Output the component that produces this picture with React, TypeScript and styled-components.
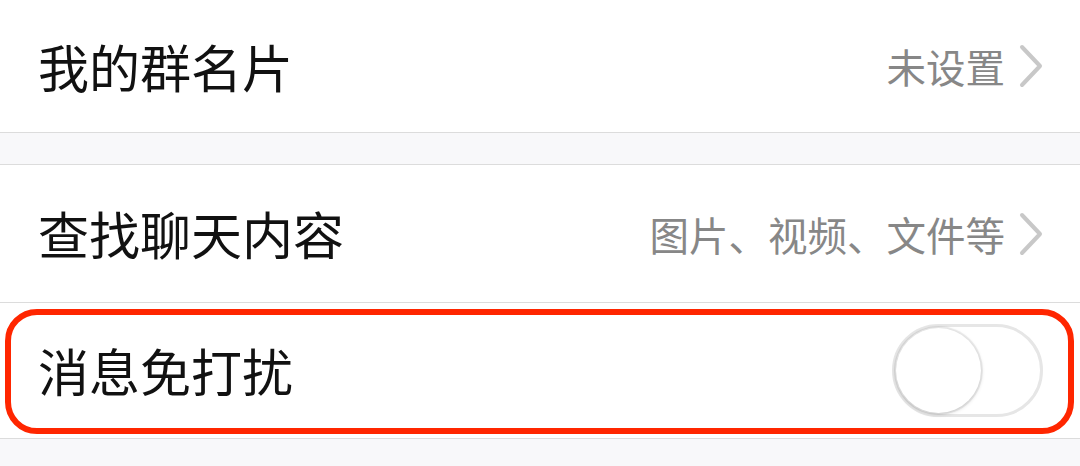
import React from "react";
import styled, { createGlobalStyle } from "styled-components";

const GlobalStyle = createGlobalStyle`
  body {
    margin: 0;
    background: #f8f8fa;
    font-family: "Noto Sans CJK SC", "Noto Sans", sans-serif;
  }
`;

const Page = styled.div`
  width: 1080px;
  height: 466px;
  overflow: hidden;
  background: #f8f8fa;
`;

const Group = styled.div<{ gapTop?: boolean }>`
  background: #fff;
  border-bottom: 1px solid #dcdcdc;
  border-top: ${(p) => (p.gapTop ? "1px solid #dcdcdc" : "none")};
  margin-top: ${(p) => (p.gapTop ? "31px" : "0")};
`;

const Row = styled.div<{ h: number; divider?: boolean }>`
  position: relative;
  height: ${(p) => p.h}px;
  display: flex;
  align-items: center;
  justify-content: space-between;
  padding: 0 37px 0 38px;
  border-bottom: ${(p) => (p.divider ? "1px solid #dcdcdc" : "none")};
`;

const Label = styled.span`
  font-size: 51px;
  color: #111;
  line-height: 1;
`;

const Value = styled.div`
  display: flex;
  align-items: center;
  gap: 14px;
  font-size: 39.5px;
  color: #878787;
  line-height: 1;
`;

const Chevron = () => (
  <svg width="24" height="44" viewBox="0 0 24 44">
    <path d="M3 3 L21 22 L3 41" fill="none" stroke="#c8c8c8" strokeWidth="4" strokeLinecap="round" strokeLinejoin="round" />
  </svg>
);

const Switch = styled.div`
  width: 151px;
  height: 93px;
  box-sizing: border-box;
  border: 3px solid #e6e6e6;
  border-radius: 47px;
  background: #fff;
  position: relative;
`;

const Knob = styled.div`
  position: absolute;
  left: 1px;
  top: 1px;
  width: 85px;
  height: 85px;
  border-radius: 50%;
  background: #fff;
  box-shadow: 0 1px 4px rgba(0, 0, 0, 0.2), 0 0 0 2px rgba(0, 0, 0, 0.06);
`;

const Highlight = styled.div`
  position: absolute;
  left: 5px;
  right: 6px;
  top: 6px;
  bottom: 4px;
  border: 6px solid #ff2600;
  border-radius: 32px;
  pointer-events: none;
`;

export default function App() {
  return (
    <Page>
      <GlobalStyle />
      <Group>
        <Row h={132}>
          <Label>我的群名片</Label>
          <Value>
            未设置
            <Chevron />
          </Value>
        </Row>
      </Group>
      <Group gapTop>
        <Row h={137} divider>
          <Label>查找聊天内容</Label>
          <Value>
            图片、视频、文件等
            <Chevron />
          </Value>
        </Row>
        <Row h={135}>
          <Label>消息免打扰</Label>
          <Switch>
            <Knob />
          </Switch>
          <Highlight />
        </Row>
      </Group>
    </Page>
  );
}
